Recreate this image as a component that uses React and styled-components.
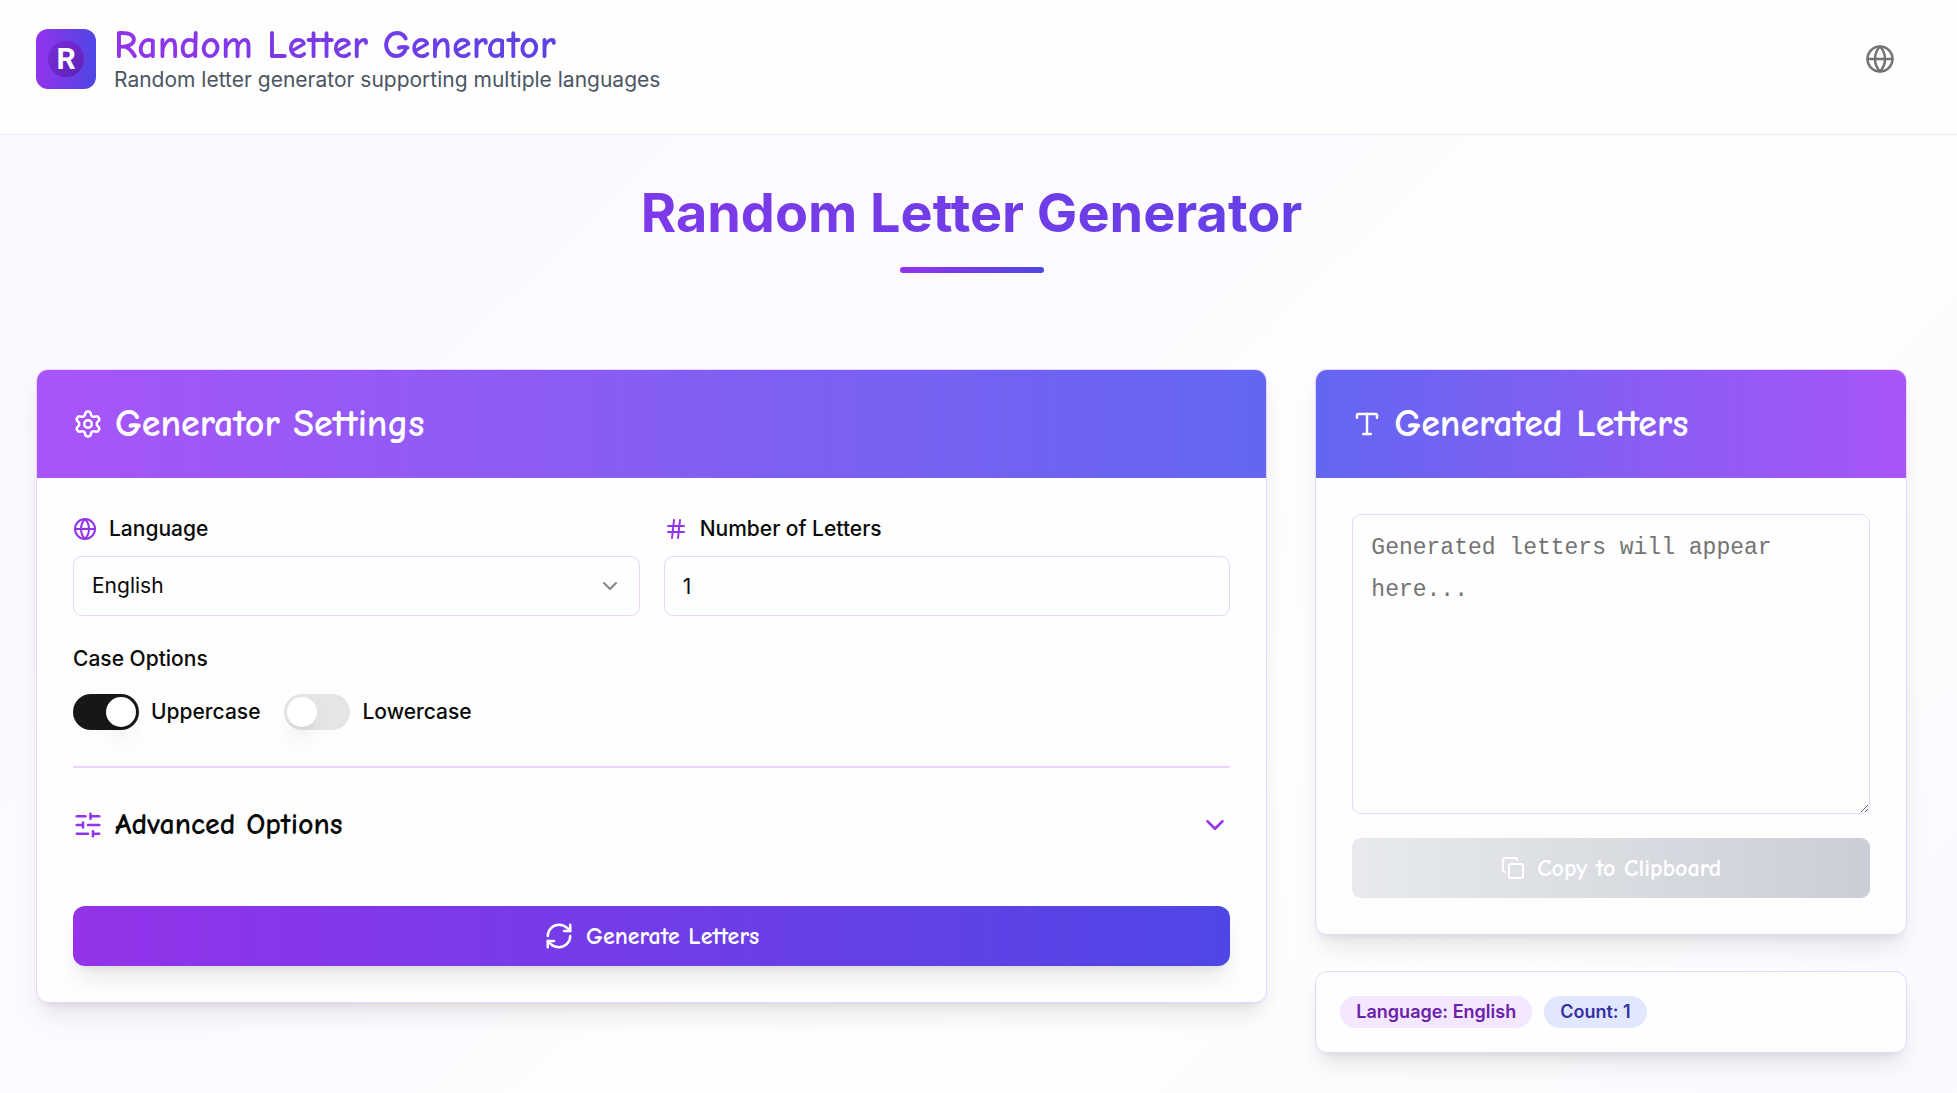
import { useState } from "react"
import styled, { createGlobalStyle } from "styled-components"
import { ChevronDown, Copy, Globe, Hash, RefreshCw, Settings, SlidersHorizontal, Type } from "lucide-react"

const GlobalStyle = createGlobalStyle`
    * {
        box-sizing: border-box;
    }

    body {
        margin: 0;
        font-family: Inter, "Liberation Sans", sans-serif;
        font-size: 21px;
        line-height: 30px;
        color: #0a0a0a;
    }

    h1, h2, h3, p {
        margin: 0;
    }

    button, input, select, textarea {
        font: inherit;
        color: inherit;
    }

    svg {
        flex-shrink: 0;
    }
`

const handwriting = `"Comic Neue", Lato, "Liberation Sans", sans-serif`

const Page = styled.div`
    min-height: 100vh;
    background: linear-gradient(135deg, #faf7ff 0%, #fdfaff 40%, #fefefe 65%, #fafaff 100%);
`

const Header = styled.header`
    display: flex;
    align-items: center;
    justify-content: space-between;
    padding: 24px 50px 40px 36px;
    background: #fefefe;
    border-bottom: 1px solid #ede9f6;
`

const Brand = styled.div`
    display: flex;
    align-items: center;
    gap: 18px;
`

const Logo = styled.div`
    display: flex;
    align-items: center;
    justify-content: center;
    width: 60px;
    height: 60px;
    border-radius: 12px;
    background: linear-gradient(to right, #9333ea, #4f46e5);
`

const LogoMark = styled.span`
    display: flex;
    align-items: center;
    justify-content: center;
    width: 36px;
    height: 36px;
    border-radius: 50%;
    background: linear-gradient(135deg, #7c2bd9, #5b21b6);
    color: white;
    font-family: Roboto, sans-serif;
    font-size: 30px;
    font-weight: 700;
`

const BrandName = styled.h1`
    font-family: ${handwriting};
    font-size: 40px;
    font-weight: 700;
    line-height: 42px;
    color: transparent;
    background: linear-gradient(to right, #9333ea, #4f46e5);
    background-clip: text;
`

const Tagline = styled.p`
    line-height: 28px;
    color: #4b5563;
`

const IconButton = styled.button`
    display: flex;
    align-items: center;
    justify-content: center;
    width: 54px;
    height: 54px;
    padding: 0;
    border: none;
    border-radius: 9px;
    background: none;
    color: #737373;
    cursor: pointer;
`

const Main = styled.main`
    padding: 48px 50px 40px 36px;
`

const Hero = styled.div`
    display: flex;
    flex-direction: column;
    align-items: center;
    gap: 24px;
    margin-bottom: 96px;
`

const HeroTitle = styled.h2`
    width: 100%;
    text-align: center;
    font-size: 54px;
    font-weight: 700;
    line-height: 60px;
    color: transparent;
    background: linear-gradient(to right, #9333ea, #4f46e5);
    background-clip: text;
`

const HeroBar = styled.div`
    width: 144px;
    height: 6px;
    border-radius: 3px;
    background: linear-gradient(to right, #9333ea, #4f46e5);
`

const Columns = styled.div`
    display: grid;
    grid-template-columns: repeat(3, 1fr);
    gap: 48px;
    align-items: start;
`

const MainColumn = styled.div`
    grid-column: span 2;
`

const SideColumn = styled.div`
    display: flex;
    flex-direction: column;
    gap: 36px;
`

const Card = styled.section`
    border: 1px solid #e9d5ff;
    border-radius: 12px;
    background: #fefefe;
    overflow: hidden;
    box-shadow: 0 15px 23px -5px rgba(0, 0, 0, 0.1), 0 6px 9px -6px rgba(0, 0, 0, 0.1);
`

const CardHeader = styled.div`
    display: flex;
    align-items: center;
    gap: 12px;
    height: 108px;
    padding: 0 36px;
    color: white;
    background: linear-gradient(to right, ${({ $from }) => $from}, ${({ $to }) => $to});
`

const CardTitle = styled.h2`
    font-family: ${handwriting};
    font-size: 38px;
    font-weight: 900;
    line-height: 42px;
`

const CardBody = styled.div`
    display: flex;
    flex-direction: column;
    padding: 36px;
`

const FieldGrid = styled.div`
    display: grid;
    grid-template-columns: 1fr 1fr;
    gap: 24px;
    margin-bottom: 28px;
`

const Field = styled.div`
    display: flex;
    flex-direction: column;
    gap: 12px;
`

const Label = styled.label`
    display: flex;
    align-items: center;
    gap: 12px;
    font-weight: 500;

    svg {
        color: #9333ea;
    }
`

const SelectWrap = styled.div`
    display: grid;
    align-items: center;

    > * {
        grid-area: 1 / 1;
    }

    svg {
        justify-self: end;
        margin-right: 18px;
        color: #858585;
        pointer-events: none;
    }
`

const Select = styled.select`
    width: 100%;
    height: 60px;
    padding: 0 18px;
    border: 1px solid #e9d5ff;
    border-radius: 9px;
    background: #fefefe;
    appearance: none;
`

const NumberInput = styled.input`
    width: 100%;
    height: 60px;
    padding: 0 18px;
    border: 1px solid #e9d5ff;
    border-radius: 9px;
    background: #fefefe;
    appearance: textfield;
`

const CaseFieldset = styled.fieldset`
    margin: 0;
    padding: 0;
    border: none;

    legend {
        padding: 0;
        margin-bottom: 20px;
        font-weight: 500;
    }
`

const CaseRow = styled.div`
    display: flex;
    gap: 24px;
`

const SwitchLabel = styled.label`
    display: flex;
    align-items: center;
    gap: 12px;
    font-weight: 500;
    cursor: pointer;
`

const Switch = styled.input`
    appearance: none;
    display: flex;
    align-items: center;
    width: 66px;
    height: 36px;
    margin: 0;
    padding: 0 3px;
    border-radius: 18px;
    background: #e5e5e5;
    cursor: pointer;

    &::before {
        content: "";
        width: 30px;
        height: 30px;
        border-radius: 50%;
        background: white;
        box-shadow: 0 15px 23px -5px rgba(0, 0, 0, 0.1), 0 6px 9px -6px rgba(0, 0, 0, 0.1);
    }

    &:checked {
        justify-content: flex-end;
        background: #171717;
    }
`

const Divider = styled.hr`
    width: 100%;
    height: 2px;
    margin: 36px 0 0;
    border: none;
    background: #e9d5ff;
`

const AdvancedToggle = styled.button`
    display: flex;
    align-items: center;
    justify-content: space-between;
    height: 114px;
    padding: 0;
    margin-bottom: 24px;
    border: none;
    background: none;
    cursor: pointer;

    svg {
        color: #9333ea;
    }
`

const AdvancedTitle = styled.span`
    display: flex;
    align-items: center;
    gap: 12px;
    font-family: ${handwriting};
    font-size: 30px;
    font-weight: 700;
`

const ActionButton = styled.button`
    display: flex;
    align-items: center;
    justify-content: center;
    gap: 12px;
    width: 100%;
    height: 60px;
    border: none;
    color: white;
    font-family: ${handwriting};
    font-size: 24px;
    font-weight: 900;
    cursor: pointer;
`

const GenerateButton = styled(ActionButton)`
    border-radius: 12px;
    background: linear-gradient(to right, #9333ea, #4f46e5);
    box-shadow: 0 15px 23px -5px rgba(0, 0, 0, 0.1), 0 6px 9px -6px rgba(0, 0, 0, 0.1);
`

const CopyButton = styled(ActionButton)`
    border-radius: 9px;
    background: linear-gradient(to right, #9333ea, #4f46e5);

    &:disabled {
        background: linear-gradient(to right, #e8eaed, #cbced6);
        cursor: default;
    }
`

const Output = styled.textarea`
    display: block;
    width: 100%;
    height: 300px;
    margin-bottom: 24px;
    padding: 12px 18px;
    border: 1px solid #e9d5ff;
    border-radius: 9px;
    background: #fefefe;
    font-family: "Liberation Mono", monospace;
    font-size: 23px;
    line-height: 42px;
    resize: vertical;

    &::placeholder {
        color: #737373;
    }
`

const Badges = styled.div`
    display: flex;
    flex-wrap: wrap;
    gap: 12px;
    padding: 24px;
`

const Badge = styled.span`
    padding: 0 16px;
    border-radius: 16px;
    background: ${({ $bg }) => $bg};
    color: ${({ $color }) => $color};
    font-size: 18px;
    font-weight: 600;
    line-height: 32px;
`

const LETTERS = "ABCDEFGHIJKLMNOPQRSTUVWXYZ"

export default function App() {
    const [language, setLanguage] = useState("English")
    const [count, setCount] = useState(1)
    const [upper, setUpper] = useState(true)
    const [lower, setLower] = useState(false)
    const [advanced, setAdvanced] = useState(false)
    const [result, setResult] = useState("")

    const generate = () => {
        const pool = (upper ? LETTERS : "") + (lower ? LETTERS.toLowerCase() : "")
        let text = ""
        for (let i = 0; i < count; i++) {
            text += pool.charAt(Math.floor(Math.random() * pool.length))
        }
        setResult(text)
    }

    return (
        <Page>
            <GlobalStyle />
            <Header>
                <Brand>
                    <Logo>
                        <LogoMark>R</LogoMark>
                    </Logo>
                    <div>
                        <BrandName>Random Letter Generator</BrandName>
                        <Tagline>Random letter generator supporting multiple languages</Tagline>
                    </div>
                </Brand>
                <IconButton aria-label="Change language">
                    <Globe size={30} />
                </IconButton>
            </Header>

            <Main>
                <Hero>
                    <HeroTitle>Random Letter Generator</HeroTitle>
                    <HeroBar />
                </Hero>

                <Columns>
                    <MainColumn>
                        <Card>
                            <CardHeader $from="#a855f7" $to="#6366f1">
                                <Settings size={30} />
                                <CardTitle>Generator Settings</CardTitle>
                            </CardHeader>
                            <CardBody>
                                <FieldGrid>
                                    <Field>
                                        <Label htmlFor="language"><Globe size={24} />Language</Label>
                                        <SelectWrap>
                                            <Select id="language" value={language} onChange={(e) => setLanguage(e.target.value)}>
                                                <option>English</option>
                                            </Select>
                                            <ChevronDown size={24} />
                                        </SelectWrap>
                                    </Field>
                                    <Field>
                                        <Label htmlFor="count"><Hash size={24} />Number of Letters</Label>
                                        <NumberInput id="count" type="number" min="1" value={count} onChange={(e) => setCount(e.target.value)} />
                                    </Field>
                                </FieldGrid>

                                <CaseFieldset>
                                    <legend>Case Options</legend>
                                    <CaseRow>
                                        <SwitchLabel>
                                            <Switch type="checkbox" role="switch" checked={upper} onChange={() => setUpper(!upper)} />
                                            Uppercase
                                        </SwitchLabel>
                                        <SwitchLabel>
                                            <Switch type="checkbox" role="switch" checked={lower} onChange={() => setLower(!lower)} />
                                            Lowercase
                                        </SwitchLabel>
                                    </CaseRow>
                                </CaseFieldset>

                                <Divider />

                                <AdvancedToggle aria-expanded={advanced} onClick={() => setAdvanced(!advanced)}>
                                    <AdvancedTitle><SlidersHorizontal size={30} />Advanced Options</AdvancedTitle>
                                    <ChevronDown size={30} />
                                </AdvancedToggle>

                                <GenerateButton onClick={generate}>
                                    <RefreshCw size={30} />Generate Letters
                                </GenerateButton>
                            </CardBody>
                        </Card>
                    </MainColumn>

                    <SideColumn>
                        <Card>
                            <CardHeader $from="#6366f1" $to="#a855f7">
                                <Type size={30} />
                                <CardTitle>Generated Letters</CardTitle>
                            </CardHeader>
                            <CardBody>
                                <Output aria-label="Generated letters" placeholder="Generated letters will appear here..." value={result} onChange={(e) => setResult(e.target.value)} />
                                <CopyButton disabled={!result} onClick={() => navigator.clipboard.writeText(result)}>
                                    <Copy size={24} />Copy to Clipboard
                                </CopyButton>
                            </CardBody>
                        </Card>
                        <Card>
                            <Badges>
                                <Badge $bg="#f3e8ff" $color="#6b21a8">Language: {language}</Badge>
                                <Badge $bg="#e0e7ff" $color="#3730a3">Count: {count}</Badge>
                            </Badges>
                        </Card>
                    </SideColumn>
                </Columns>
            </Main>
        </Page>
    )
}
